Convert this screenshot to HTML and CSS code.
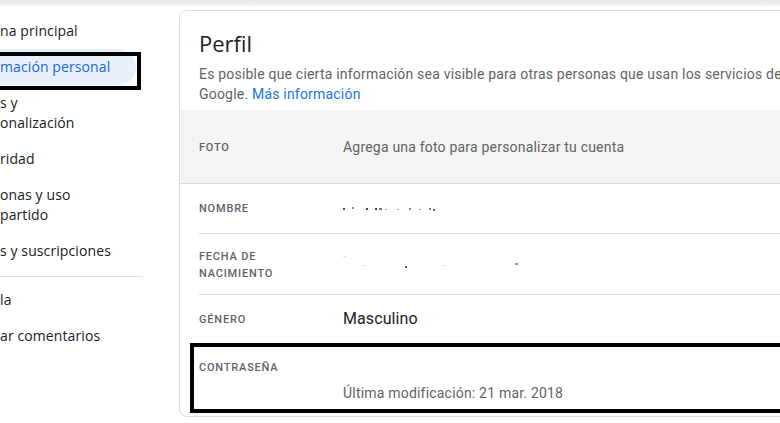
FILE: index.html
```html
<!DOCTYPE html>
<html lang="es">
<head>
<meta charset="utf-8">
<title>Información personal</title>
<link rel="stylesheet" href="styles.css">
</head>
<body>
<div class="topbar"></div>
<div class="layout">
  <nav class="sidebar">
    <a class="nav-item">na principal</a>
    <a class="nav-item is-active">mación personal</a>
    <a class="nav-item">s y<br>onalización</a>
    <a class="nav-item">ridad</a>
    <a class="nav-item">onas y uso<br>partido</a>
    <a class="nav-item">s y suscripciones</a>
    <div class="nav-divider"></div>
    <a class="nav-item">la</a>
    <a class="nav-item">ar comentarios</a>
  </nav>
  <main class="content">
    <section class="card">
      <header class="card-head">
        <h1 class="card-title">Perfil</h1>
        <p class="card-desc">Es posible que cierta información sea visible para otras personas que usan los servicios de Google. <a class="link">Más información</a></p>
      </header>
      <div class="row row-photo">
        <div class="label">Foto</div>
        <div class="value">Agrega una foto para personalizar tu cuenta</div>
      </div>
      <div class="row row-name">
        <div class="label">Nombre</div>
        <div class="value">
          <svg class="redacted" width="110" height="6" viewBox="0 0 110 6">
            <rect x="0" y="2" width="2" height="2" fill="#555"/>
            <rect x="9" y="1" width="2" height="2" fill="#888"/>
            <rect x="23" y="2" width="2" height="2" fill="#444"/>
            <rect x="32" y="2" width="2" height="2" fill="#444"/>
            <rect x="36" y="2" width="3" height="2" fill="#777"/>
            <rect x="42" y="3" width="2" height="1" fill="#999"/>
            <rect x="54" y="3" width="2" height="1" fill="#999"/>
            <rect x="66" y="2" width="2" height="2" fill="#888"/>
            <rect x="76" y="3" width="2" height="1" fill="#aaa"/>
            <rect x="86" y="2" width="2" height="2" fill="#777"/>
            <rect x="90" y="3" width="2" height="2" fill="#666"/>
          </svg>
        </div>
      </div>
      <div class="row row-birth">
        <div class="label">Fecha de<br>nacimiento</div>
        <div class="value">
          <svg class="redacted" width="180" height="18" viewBox="0 0 180 18">
            <rect x="0" y="0" width="3" height="1" fill="#e4e4e4"/>
            <rect x="20" y="9" width="3" height="1" fill="#d8d8d8"/>
            <rect x="62" y="10" width="2" height="2" fill="#555"/>
            <rect x="100" y="9" width="3" height="1" fill="#e0e0e0"/>
            <rect x="172" y="7" width="3" height="2" fill="#999"/>
          </svg>
        </div>
      </div>
      <div class="row row-gender">
        <div class="label">Género</div>
        <div class="value value-strong">Masculino</div>
      </div>
      <div class="row row-password">
        <div class="label">Contraseña</div>
        <div class="value">Última modificación: 21 mar. 2018</div>
      </div>
    </section>
  </main>
</div>
</body>
</html>
```
FILE: styles.css
```css
html, body {
  margin: 0;
  padding: 0;
}

body {
  width: 780px;
  height: 423px;
  overflow: hidden;
  background: #ffffff;
  font-family: Roboto, "Liberation Sans", Arial, sans-serif;
  color: #202124;
}

.topbar {
  height: 6px;
  background: linear-gradient(#e6e6e6, #f7f7f7);
}

.layout {
  display: flex;
  align-items: flex-start;
}

/* Sidebar */
.sidebar {
  flex: none;
  width: 136px;
  padding-top: 7px;
  display: flex;
  flex-direction: column;
}

.nav-item {
  position: relative;
  display: block;
  padding: 8px 0;
  font-family: "Open Sans", Roboto, sans-serif;
  font-size: 14px;
  line-height: 20px;
  color: #202124;
  white-space: nowrap;
  letter-spacing: 0.1px;
}

.nav-item.is-active {
  background: #e8f0fe;
  color: #1967d2;
  border-radius: 0 18px 18px 0;
}

.nav-item.is-active::after {
  content: "";
  position: absolute;
  top: 3px;
  bottom: -5px;
  left: -10px;
  right: -5px;
  border: 4px solid #000;
}

.nav-divider {
  height: 1px;
  background: #e0e0e0;
  margin: 7px -7px 5px 0;
}

/* Main content */
.content {
  flex: none;
  margin-left: 43px;
  padding-top: 4px;
}

.card {
  width: 700px;
  border: 1px solid #dadce0;
  border-radius: 8px;
  overflow: hidden;
  padding-bottom: 3px;
  background: #fff;
}

.card-head {
  padding: 18px 19px 6px;
}

.card-title {
  margin: 0;
  font-family: "Open Sans", Roboto, sans-serif;
  font-weight: 400;
  font-size: 22px;
  line-height: 28px;
  color: #202124;
}

.card-desc {
  margin: 7px 0 0;
  max-width: 620px;
  font-size: 14px;
  line-height: 20px;
  letter-spacing: 0.2px;
  color: #5f6368;
}

.link {
  color: #1a73e8;
}

/* Rows */
.row {
  display: flex;
  align-items: center;
  margin-left: 19px;
  border-top: 1px solid #dadce0;
}

.label {
  flex: none;
  width: 144px;
  font-size: 11px;
  font-weight: 500;
  line-height: 17px;
  letter-spacing: 0.8px;
  text-transform: uppercase;
  color: #5f6368;
}

.value {
  font-size: 14px;
  line-height: 20px;
  letter-spacing: 0.2px;
  color: #5f6368;
}

.value-strong {
  font-size: 16px;
  line-height: 24px;
  letter-spacing: 0.1px;
  color: #202124;
}

.redacted {
  display: block;
}

.row-photo {
  margin-left: 0;
  padding-left: 19px;
  height: 73px;
  border-top: none;
  border-bottom: 1px solid #dadce0;
  background: #f4f4f4;
}

.row-photo .label {
  padding-top: 2px;
}

.row-name {
  height: 49px;
  border-top: none;
}

.row-birth {
  height: 60px;
}

.row-birth .label {
  padding-top: 2px;
}

.row-birth .value {
  align-self: flex-start;
  padding-top: 22px;
}

.row-gender {
  height: 48px;
}

.row-password {
  position: relative;
  display: grid;
  grid-template-columns: 144px 1fr;
  align-items: start;
  align-content: start;
  row-gap: 7px;
  box-sizing: border-box;
  height: 70px;
  padding-top: 15px;
}

.row-password .label {
  grid-column: 1;
  grid-row: 1;
}

.row-password .value {
  grid-column: 2;
  grid-row: 2;
}

.row-password::after {
  content: "";
  position: absolute;
  top: -1px;
  bottom: 0;
  left: -9px;
  right: -20px;
  border: 4px solid #000;
}
```
